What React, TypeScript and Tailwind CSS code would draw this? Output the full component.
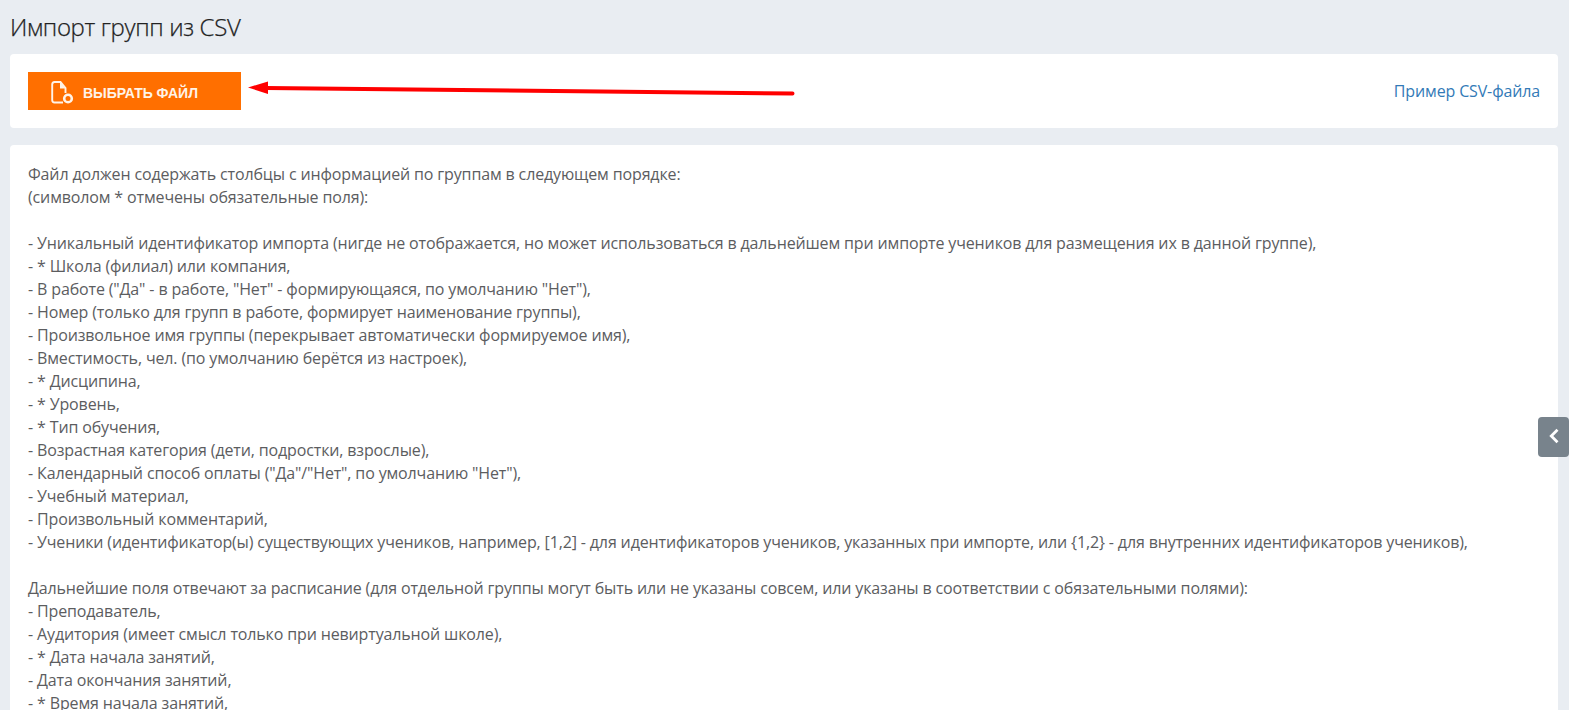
const columns = [
  'Файл должен содержать столбцы с информацией по группам в следующем порядке:',
  '(символом * отмечены обязательные поля):',
  '',
  '- Уникальный идентификатор импорта (нигде не отображается, но может использоваться в дальнейшем при импорте учеников для размещения их в данной группе),',
  '- * Школа (филиал) или компания,',
  '- В работе ("Да" - в работе, "Нет" - формирующаяся, по умолчанию "Нет"),',
  '- Номер (только для групп в работе, формирует наименование группы),',
  '- Произвольное имя группы (перекрывает автоматически формируемое имя),',
  '- Вместимость, чел. (по умолчанию берётся из настроек),',
  '- * Дисципина,',
  '- * Уровень,',
  '- * Тип обучения,',
  '- Возрастная категория (дети, подростки, взрослые),',
  '- Календарный способ оплаты ("Да"/"Нет", по умолчанию "Нет"),',
  '- Учебный материал,',
  '- Произвольный комментарий,',
  '- Ученики (идентификатор(ы) существующих учеников, например, [1,2] - для идентификаторов учеников, указанных при импорте, или {1,2} - для внутренних идентификаторов учеников),',
  '',
  'Дальнейшие поля отвечают за расписание (для отдельной группы могут быть или не указаны совсем, или указаны в соответствии с обязательными полями):',
  '- Преподаватель,',
  '- Аудитория (имеет смысл только при невиртуальной школе),',
  '- * Дата начала занятий,',
  '- Дата окончания занятий,',
  '- * Время начала занятий,',
];

export default function App() {
  return (
    <div className="relative h-[710px] w-full overflow-hidden bg-[#e9edf2] px-[10px] font-['Open_Sans',sans-serif] text-[16px] tracking-[-0.14px] text-[#5c5d5f]">
      <h1 className="flex h-[54px] items-center text-[24px] font-light tracking-[-0.35px] text-[#222] [-webkit-text-stroke:0.25px_#222]">Импорт групп из CSV</h1>
      <div className="mr-px flex h-[74px] items-center justify-between rounded bg-white px-[18px]">
        <button className="flex h-[38px] w-[213px] items-center bg-[#ff6f00] pl-[23px] font-['Liberation_Sans',sans-serif] text-[14px] font-bold tracking-[-0.05px] text-[#fff3e8]">
          <svg className="mt-[4px] shrink-0" width="23" height="24" viewBox="0 0 23 24" fill="none" stroke="#fff3e8" strokeWidth="1.9">
            <path d="M12 21.500H3.500Q1.200 21.500 1.200 19V3.500Q1.200 1 3.500 1H9.500L14.500 7V12" />
            <path d="M9 1V7.500H14.500Z" fill="#fff3e8" stroke="none" />
            <circle cx="17" cy="17.500" r="3.800" strokeWidth="2.600" />
          </svg>
          <span className="mt-[4px] ml-[9px]">ВЫБРАТЬ ФАЙЛ</span>
        </button>
        <a className="text-[#337ab7]">Пример CSV-файла</a>
      </div>
      <div className="mt-[17px] mr-px h-[700px] rounded bg-white px-[18px] pt-[18px] leading-[23px]">
        {columns.map((line, i) => (
          <div key={i} className="h-[23px] whitespace-nowrap">{line}</div>
        ))}
      </div>
      <svg className="absolute left-[240px] top-[70px]" width="570" height="40" viewBox="240 70 570 40">
        <path d="M266 88L792.500 93.600" stroke="#f00" strokeWidth="4" strokeLinecap="round" />
        <path d="M248 87.500L268 81.500V94Z" fill="#f00" />
      </svg>
      <button className="absolute right-0 top-[417px] flex h-[40px] w-[31px] items-center justify-center rounded bg-[#78838c]">
        <svg className="-mt-[2px]" width="12" height="16" viewBox="0 0 12 16" fill="none" stroke="white" strokeWidth="2.800">
          <path d="M9.500 1.800L3.300 8L9.500 14.200" />
        </svg>
      </button>
    </div>
  );
}
